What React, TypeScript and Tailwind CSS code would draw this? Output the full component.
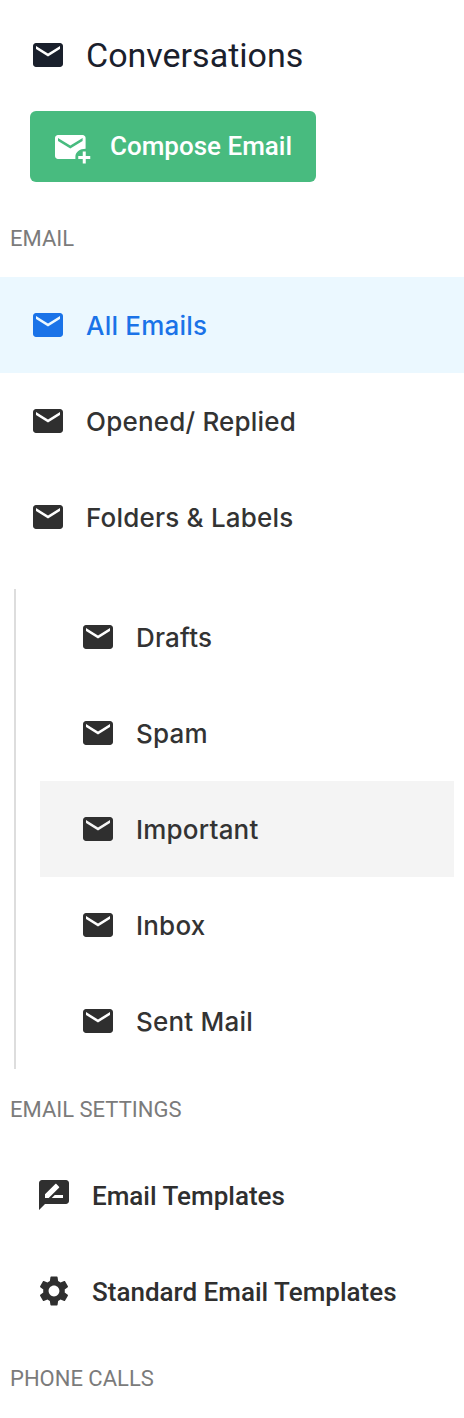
const MAIL = "M20 4H4c-1.1 0-1.99.9-1.99 2L2 18c0 1.1.9 2 2 2h16c1.1 0 2-.9 2-2V6c0-1.1-.9-2-2-2zm0 4l-8 5-8-5V6l8 5 8-5v2z";
const REVIEW = "M20 2H4c-1.1 0-1.99.9-1.99 2L2 22l4-4h14c1.1 0 2-.9 2-2V4c0-1.1-.9-2-2-2zM6 14v-2.47l6.88-6.88c.2-.2.51-.2.71 0l1.77 1.77c.2.2.2.51 0 .71L8.47 14H6zm12 0h-7.5l2-2H18v2z";
const GEAR = "M19.14 12.94c.04-.3.06-.61.06-.94 0-.32-.02-.64-.07-.94l2.03-1.58c.18-.14.23-.41.12-.61l-1.92-3.32c-.12-.22-.37-.29-.59-.22l-2.39.96c-.5-.38-1.03-.7-1.62-.94l-.36-2.54c-.04-.24-.24-.41-.48-.41h-3.84c-.24 0-.43.17-.47.41l-.36 2.54c-.59.24-1.13.57-1.62.94l-2.39-.96c-.22-.08-.47 0-.59.22L2.74 8.87c-.12.21-.08.47.12.61l2.03 1.58c-.05.3-.09.63-.09.94s.02.64.07.94l-2.03 1.58c-.18.14-.23.41-.12.61l1.92 3.32c.12.22.37.29.59.22l2.39-.96c.5.38 1.03.7 1.62.94l.36 2.54c.05.24.24.41.48.41h3.84c.24 0 .44-.17.47-.41l.36-2.54c.59-.24 1.13-.56 1.62-.94l2.39.96c.22.08.47 0 .59-.22l1.92-3.32c.12-.22.07-.47-.12-.61l-2.01-1.58zM12 15.6c-1.98 0-3.6-1.62-3.6-3.6s1.62-3.6 3.6-3.6 3.6 1.62 3.6 3.6-1.62 3.6-3.6 3.6z";
const COMPOSE = "M22.4 13.2V6c0-1.1-.9-2-2-2H4c-1.1 0-2 .9-2 2v12c0 1.1.9 2 2 2h11.6v-1.6c0-2.9 2.9-5.2 6.8-5.2zM20.4 8l-8.2 5L4 8V6l8.2 5 8.2-5v2zM20.5 15h2v3h3v2h-3v3h-2v-3h-3v-2h3z";

function Icon({ d, className }: { d: string; className: string }) {
  return (
    <svg viewBox="0 0 24 24" fill="currentColor" className={`w-9 h-9 shrink-0 ${className}`}>
      <path d={d} />
    </svg>
  );
}

function Label({ children }: { children: string }) {
  return <div className="pl-2.5 text-[22px] leading-[30px] text-[#7b7b7b]">{children}</div>;
}

function Row({ label, d = MAIL, className = "", textClass = "text-[26px] font-[450] tracking-[0.2px] font-['Inter',sans-serif] text-[#333333]" }: { label: string; d?: string; className?: string; textClass?: string }) {
  return (
    <div className={`flex items-center h-24 gap-5 ${className}`}>
      <Icon d={d} className="" />
      <span className={textClass}>{label}</span>
    </div>
  );
}

export default function App() {
  return (
    <div className="w-[464px] h-[1418px] overflow-hidden bg-white text-[#2f2f2f] font-['Roboto',sans-serif]">
      <div className="flex items-center gap-5 pl-[30px] pt-[37px] text-[#1a202c]">
        <Icon d={MAIL} className="" />
        <h1 className="text-[34px] leading-9 font-normal">Conversations</h1>
      </div>
      <div className="ml-[30px] mt-[38px] w-[286px] h-[71px] rounded-md bg-[#48bb7f] text-white flex items-center pl-[22px] gap-[22px]">
        <Icon d={COMPOSE} className="overflow-visible" />
        <span className="text-[26px] font-medium">Compose Email</span>
      </div>
      <div className="mt-[42px]"><Label>EMAIL</Label></div>
      <div className="mt-[23px]">
        <Row label="All Emails" className="pl-[30px] bg-[#ebf8ff] text-[#1a73e8]" textClass="text-[26px] font-[450] tracking-[0.2px] font-['Inter',sans-serif]" />
        <Row label="Opened/ Replied" className="pl-[30px]" />
        <Row label="Folders & Labels" className="pl-[30px]" />
      </div>
      <div className="ml-3.5 mt-6 w-[440px] border-l-2 border-[#dddddd] pl-6">
        <Row label="Drafts" className="pl-10" />
        <Row label="Spam" className="pl-10" />
        <Row label="Important" className="pl-10 bg-[#f4f4f4]" />
        <Row label="Inbox" className="pl-10" />
        <Row label="Sent Mail" className="pl-10" />
      </div>
      <div className="mt-[26px]"><Label>EMAIL SETTINGS</Label></div>
      <div className="mt-[22px]">
        <Row label="Email Templates" d={REVIEW} className="pl-9" textClass="relative top-px text-[26px] font-medium" />
        <Row label="Standard Email Templates" d={GEAR} className="pl-9" textClass="relative top-px text-[26px] font-medium" />
      </div>
      <div className="mt-[25px]"><Label>PHONE CALLS</Label></div>
    </div>
  );
}
